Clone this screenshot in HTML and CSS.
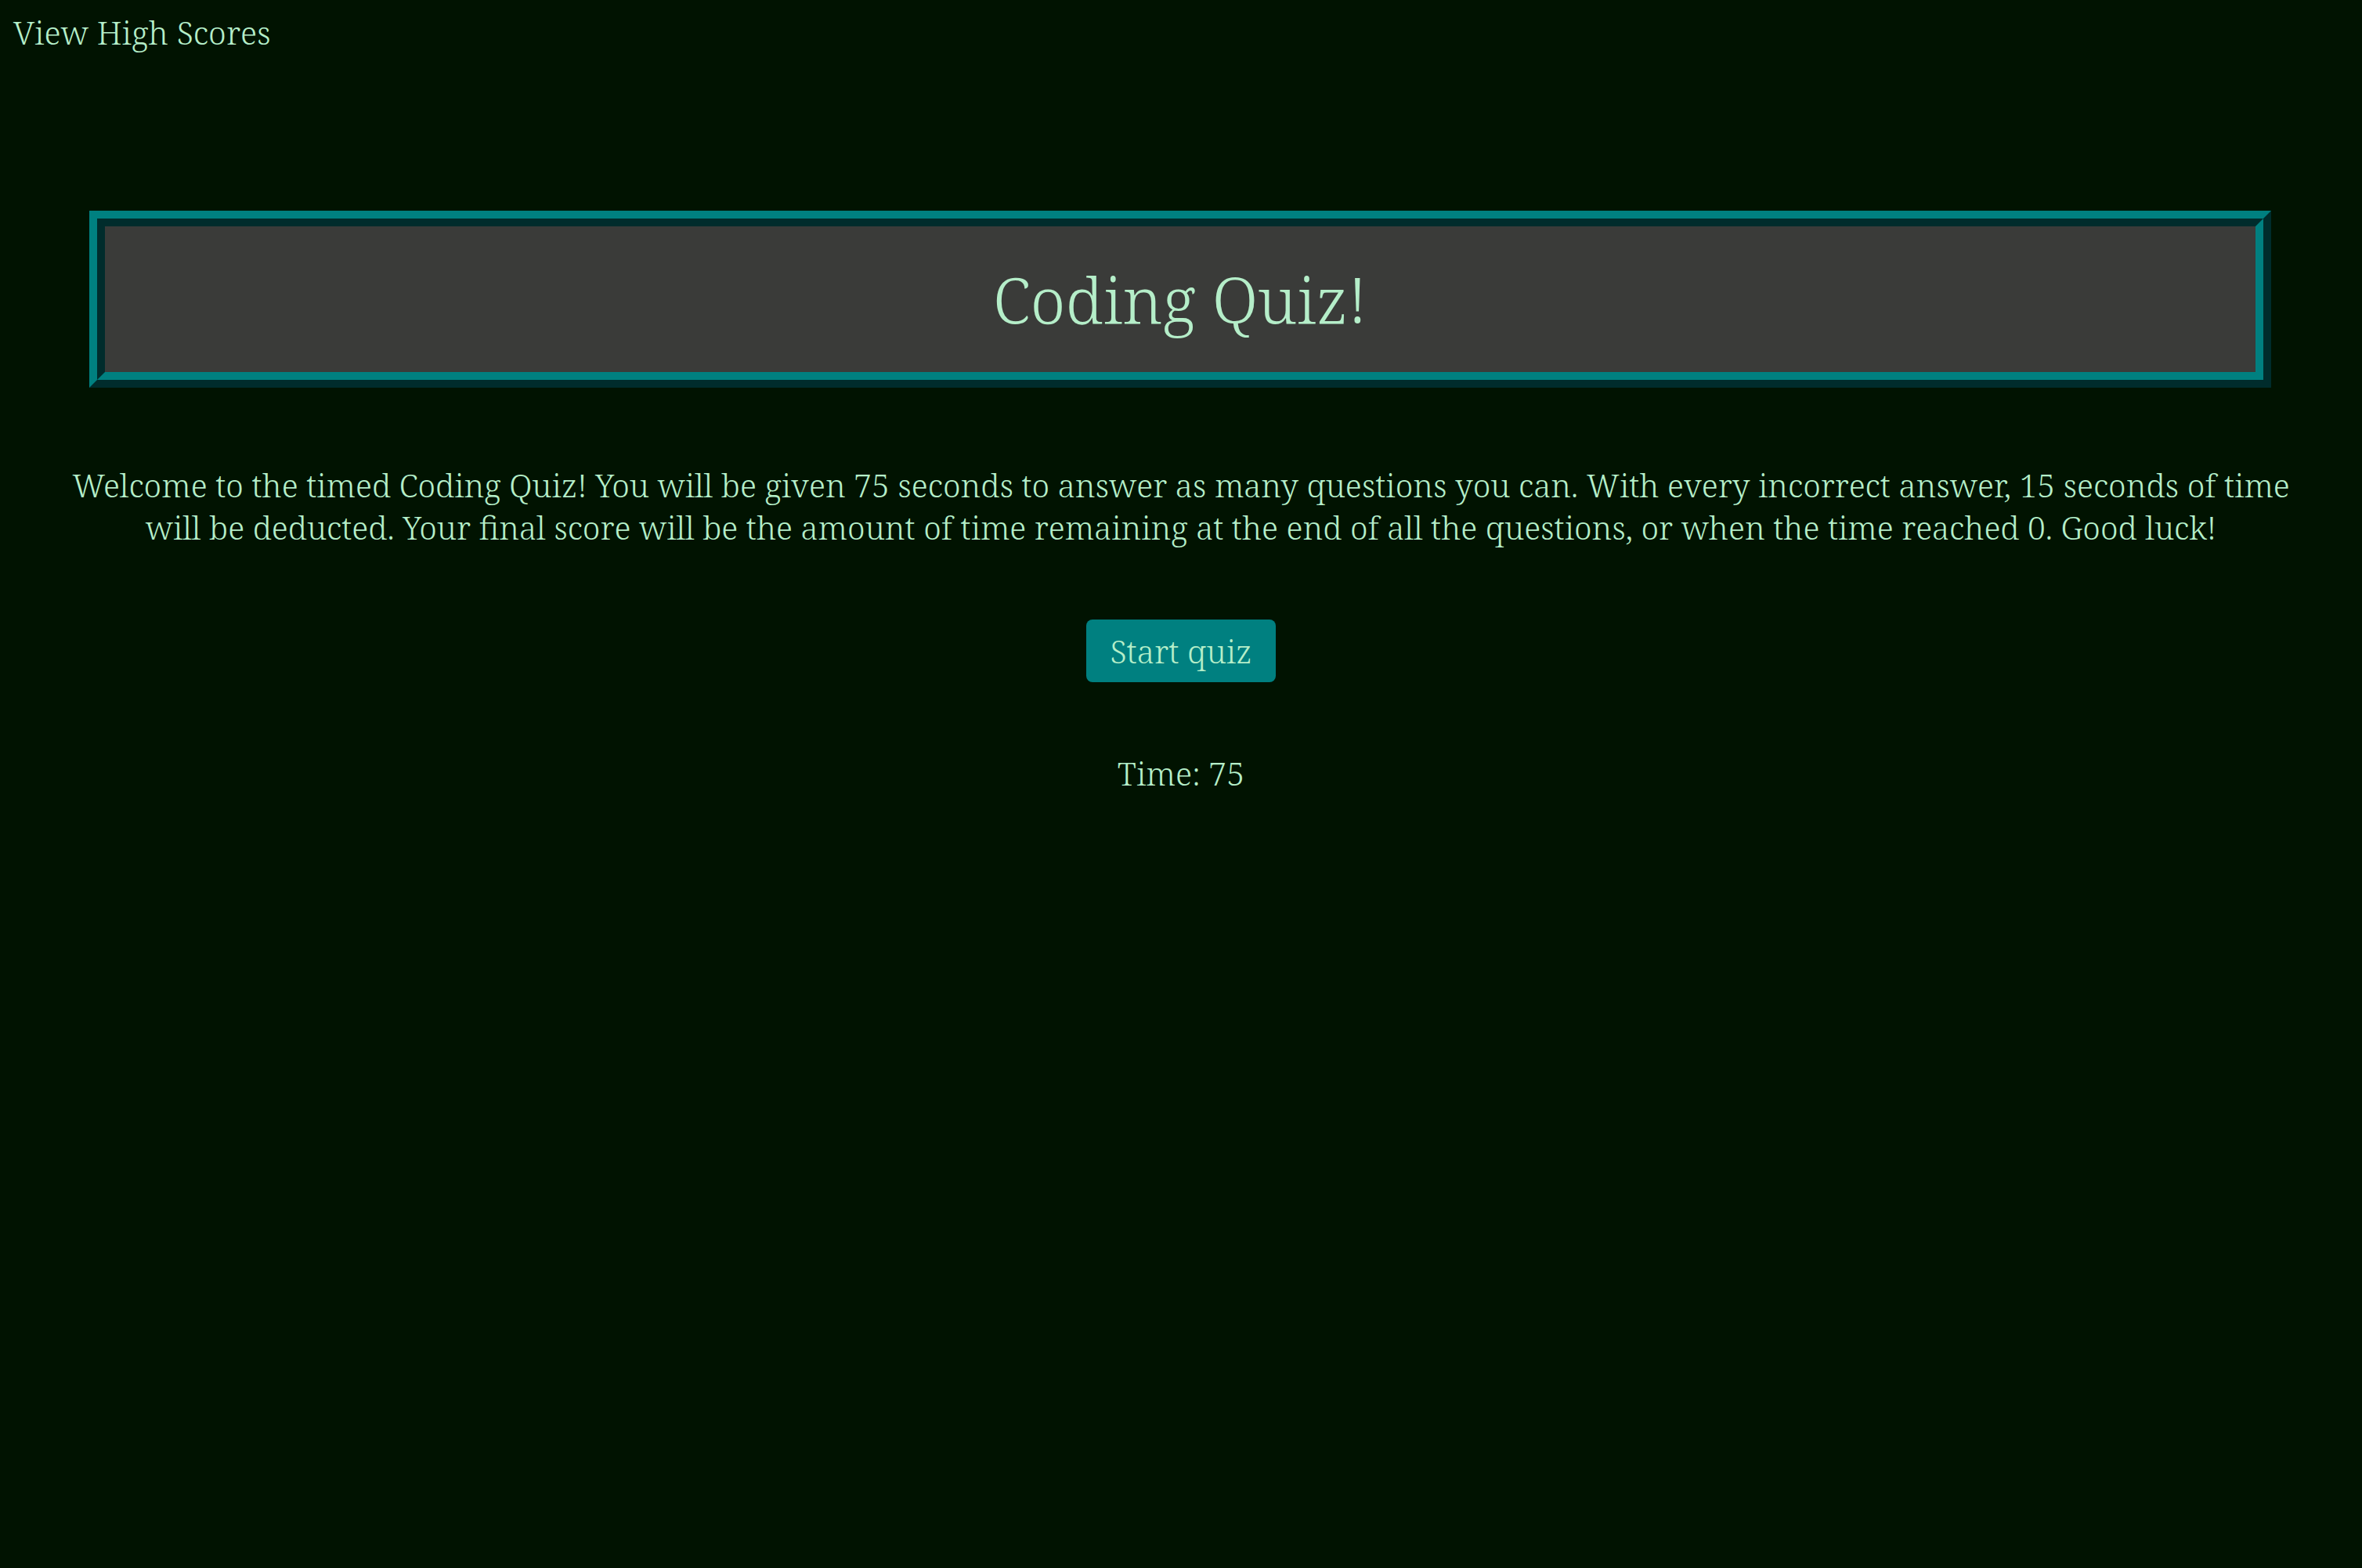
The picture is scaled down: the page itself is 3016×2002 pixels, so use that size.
FILE: index.html
```html
<!DOCTYPE html>
<html lang="en">
<head>
<meta charset="utf-8">
<title>Coding Quiz</title>
<link rel="stylesheet" href="styles.css">
</head>
<body>
<header class="top">
  <a class="scores-link" href="#">View High Scores</a>
</header>
<main class="quiz">
  <div class="title-box">
    <h1 class="title">Coding Quiz!</h1>
  </div>
  <p class="intro">Welcome to the timed Coding Quiz! You will be given 75 seconds to answer as many questions you can. With every incorrect answer, 15 seconds of time will be deducted. Your final score will be the amount of time remaining at the end of all the questions, or when the time reached 0. Good luck!</p>
  <button class="start-btn" type="button">Start quiz</button>
  <p class="timer">Time: 75</p>
</main>
</body>
</html>
```
FILE: styles.css
```css
html, body {
  background: #011301;
}
body {
  margin: 0;
  color: #b5eec9;
  font-family: "Noto Serif", "DejaVu Serif", serif;
  font-weight: 300;
  font-size: 40px;
  line-height: 54px;
}
.top {
  padding: 14px 17px 0;
  height: 54px;
}
.scores-link {
  color: #b5eec9;
  text-decoration: none;
  font-size: 41px;
}
.quiz {
  display: flex;
  flex-direction: column;
  align-items: center;
}
.title-box {
  align-self: stretch;
  margin: 201px 116px 0 114px;
  height: 186px;
  border: 20px ridge #008080;
  background: #3a3b39;
  display: flex;
  align-items: center;
  justify-content: center;
}
.title {
  margin: 0;
  font-weight: 300;
  font-size: 81px;
  line-height: 1;
  padding-bottom: 2px;
}
.intro {
  margin: 97px 0 0;
  padding: 0 60px;
  text-align: center;
  font-size: 40.7px;
}
.start-btn {
  margin-top: 91px;
  height: 80px;
  padding: 0 30px;
  border: none;
  border-radius: 8px;
  background: #008080;
  color: #b5eec9;
  font-family: inherit;
  font-weight: 300;
  font-size: 41px;
  line-height: 1;
}
.timer {
  margin: 89px 0 0;
  font-size: 41px;
}
```
